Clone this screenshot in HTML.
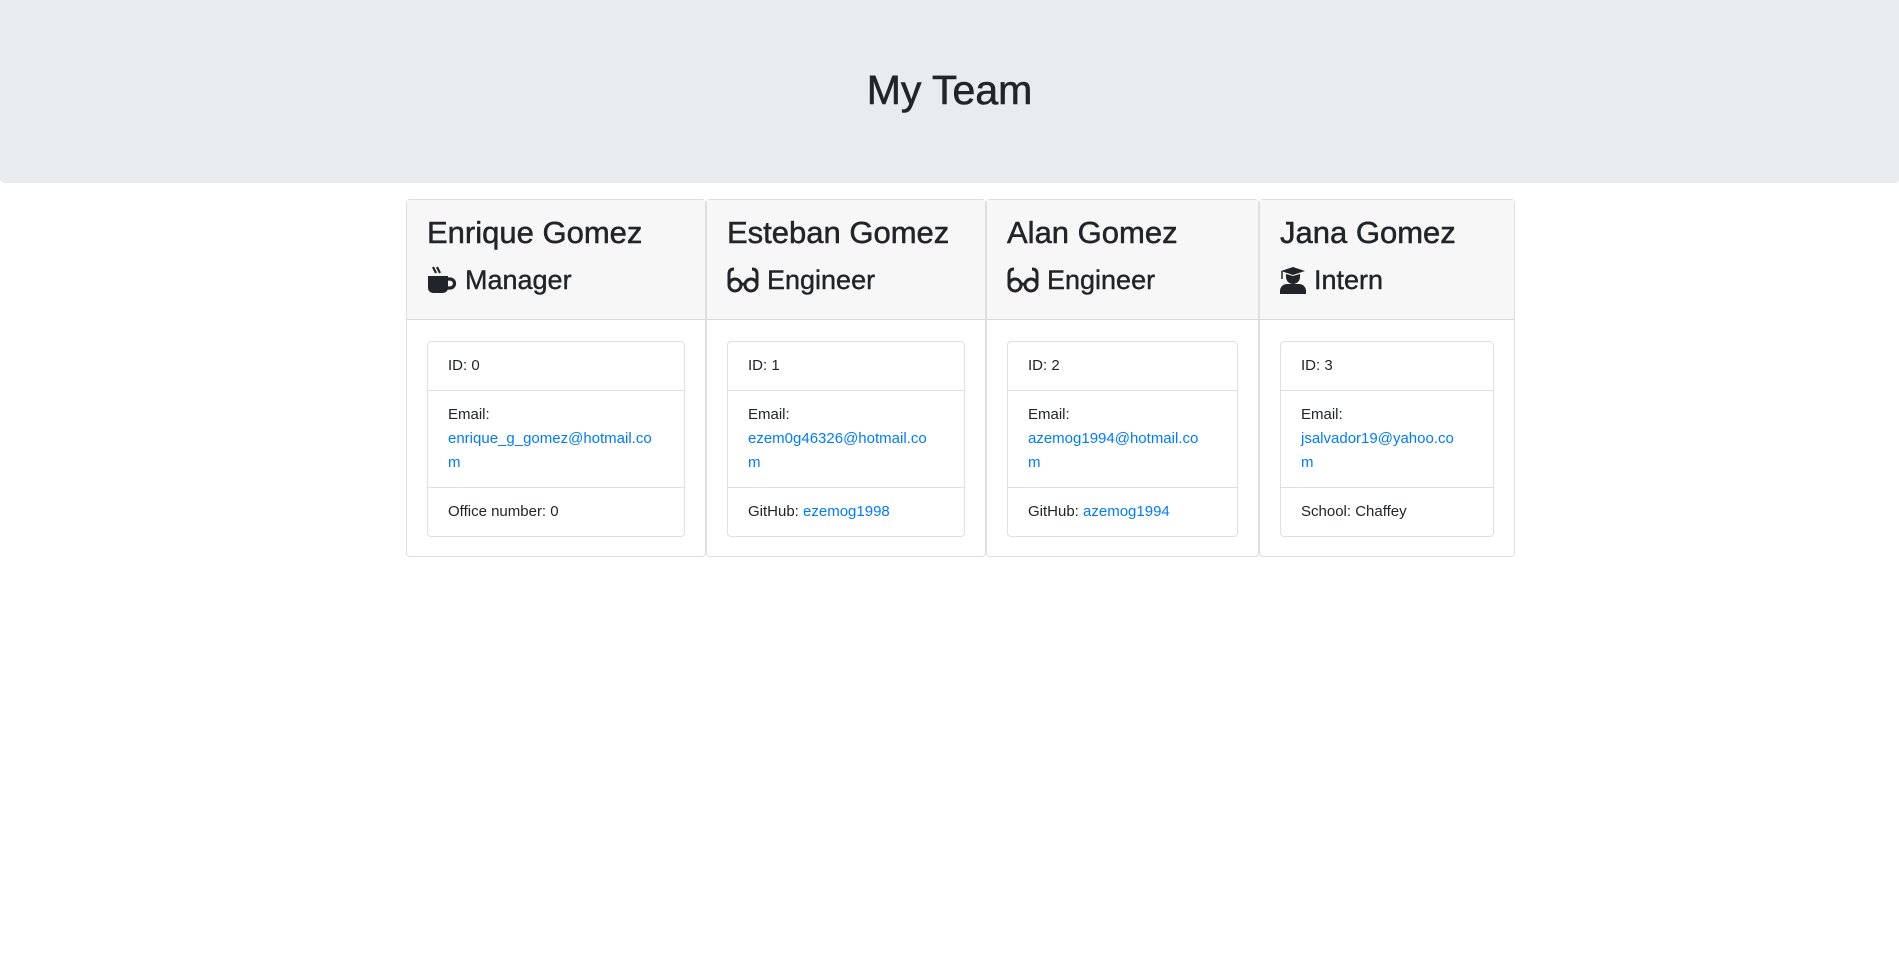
<!DOCTYPE html>
<html><head><style>
*{box-sizing:border-box;margin:0;padding:0}
body{width:1899px;height:966px;background:#fff;font-family:"Liberation Sans",sans-serif;color:#212529;overflow:hidden}
.jumbo{height:183px;background:#e9ecef;border-radius:0 0 4px 4px;position:relative}
.jumbo h1{position:absolute;left:0;right:0;top:66px;text-align:center;font-size:41px;font-weight:500;line-height:48px;-webkit-text-stroke:0.6px #212529}
.card{position:absolute;top:199px;height:358px;border:1px solid rgba(0,0,0,.125);border-radius:4px;background:#fff}
.hd{height:120px;background:#f7f7f7;border-bottom:1px solid rgba(0,0,0,.125);padding:12px 20px 0 20px}
.hd h2{font-size:31px;font-weight:500;line-height:38px;white-space:nowrap;margin-top:2px;-webkit-text-stroke:0.5px #212529}
.hd h3{font-size:27px;font-weight:500;line-height:34px;margin-top:11px;white-space:nowrap;display:flex;align-items:center;-webkit-text-stroke:0.4px #212529}
.hd h3 svg{margin-right:8px}
.list{position:absolute;top:141px;left:20px;right:20px;border:1px solid rgba(0,0,0,.125);border-radius:4px}
.li{padding:12px 20px;font-size:15px;line-height:24px;border-top:1px solid rgba(0,0,0,.125);white-space:nowrap}
.li:first-child{border-top:0}
a{color:#007bff;text-decoration:none}
</style></head><body>
<div class="jumbo"><h1>My Team</h1></div>

<div class="card" style="left:406px;width:300px">
<div class="hd"><h2>Enrique Gomez</h2>
<h3><svg width="30" height="28" viewBox="0 0 30 28"><path d="M6 1l3 6M10 1l3 6" stroke="#212529" stroke-width="2.2" fill="none"/><path d="M1 10h20v12a5 5 0 0 1-5 5H6a5 5 0 0 1-5-5z" fill="#212529"/><path d="M20 13h3a4.5 4.5 0 0 1 0 9h-3" stroke="#212529" stroke-width="3.2" fill="none"/></svg>Manager</h3></div>
<div class="list"><div class="li">ID: 0</div><div class="li">Email: <br><a>enrique_g_gomez@hotmail.co<br>m</a></div><div class="li">Office number: 0</div></div>
</div>

<div class="card" style="left:706px;width:280px">
<div class="hd"><h2>Esteban Gomez</h2>
<h3><svg width="32" height="26" viewBox="0 0 32 26"><g stroke="#212529" stroke-width="3" fill="none"><circle cx="8" cy="18" r="6"/><circle cx="24" cy="18" r="6"/><path d="M14 18q2-2 4 0M2 18V7q0-5 5-5M30 18V7q0-5-5-5"/></g></svg>Engineer</h3></div>
<div class="list"><div class="li">ID: 1</div><div class="li">Email: <br><a>ezem0g46326@hotmail.co<br>m</a></div><div class="li">GitHub: <a>ezemog1998</a></div></div>
</div>

<div class="card" style="left:986px;width:273px">
<div class="hd"><h2>Alan Gomez</h2>
<h3><svg width="32" height="26" viewBox="0 0 32 26"><g stroke="#212529" stroke-width="3" fill="none"><circle cx="8" cy="18" r="6"/><circle cx="24" cy="18" r="6"/><path d="M14 18q2-2 4 0M2 18V7q0-5 5-5M30 18V7q0-5-5-5"/></g></svg>Engineer</h3></div>
<div class="list"><div class="li">ID: 2</div><div class="li">Email: <br><a>azemog1994@hotmail.co<br>m</a></div><div class="li">GitHub: <a>azemog1994</a></div></div>
</div>

<div class="card" style="left:1259px;width:256px">
<div class="hd"><h2>Jana Gomez</h2>
<h3><svg width="26" height="28" viewBox="0 0 26 28"><path d="M1 5L13 1l12 4-12 4z" fill="#212529"/><path d="M6 8v3a7 7 0 0 0 14 0V8l-7 2z" fill="#212529"/><path d="M2 5v8" stroke="#212529" stroke-width="1.5"/><path d="M0 28v-3a7 7 0 0 1 7-7h12a7 7 0 0 1 7 7v3z" fill="#212529"/></svg>Intern</h3></div>
<div class="list"><div class="li">ID: 3</div><div class="li">Email: <br><a>jsalvador19@yahoo.co<br>m</a></div><div class="li">School: Chaffey</div></div>
</div>
</body></html>
